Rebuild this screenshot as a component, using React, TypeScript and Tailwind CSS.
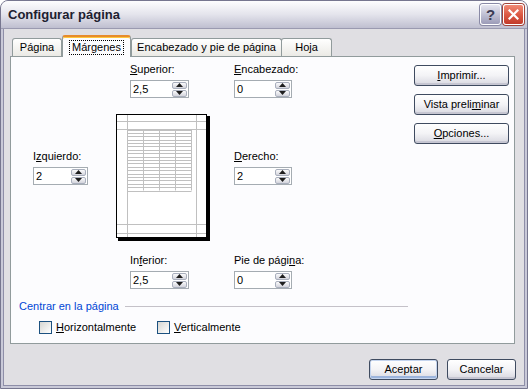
import React from "react";

function U({ children }: { children: React.ReactNode }) {
  return <span className="underline">{children}</span>;
}

function SpinBtn({ up }: { up?: boolean }) {
  return (
    <div className="w-[15px] h-[7px] rounded-[2px] border border-[#a9afbd] bg-linear-to-b from-[#fbfbfc] to-[#d3d4dc] flex items-center justify-center">
      <svg width="7" height="4" viewBox="0 0 7 4">
        <path d={up ? "M0 4 L3.5 0 L7 4Z" : "M0 0 L3.5 4 L7 0Z"} fill="#1e1e1e" />
      </svg>
    </div>
  );
}

function Field({ label, value, w }: { label: React.ReactNode; value: string; w: string }) {
  return (
    <div className="flex flex-col">
      <div className="leading-[13px] whitespace-nowrap">{label}</div>
      <div className={`mt-[4px] h-[18px] ${w} border border-[#a5acb2] bg-white flex items-center justify-between pl-[2px] pr-px`}>
        <span className="leading-[13px]">{value}</span>
        <div className="flex flex-col gap-px">
          <SpinBtn up />
          <SpinBtn />
        </div>
      </div>
    </div>
  );
}

function Btn({ children, w, def }: { children: React.ReactNode; w: string; def?: boolean }) {
  return (
    <div
      className={`${w} h-[21px] rounded-[3px] border border-[#3f4b60] bg-linear-to-b from-white via-[#f3f3f6] to-[#d8d8e0] flex items-center justify-center leading-[13px] whitespace-nowrap ${
        def ? "shadow-[inset_0_0_0_1px_#c4d4ee,inset_0_-2px_0_1px_#9cb4dc]" : "shadow-[inset_0_-2px_0_#c6c6d2]"
      }`}
    >
      {children}
    </div>
  );
}

function Check({ label, w }: { label: React.ReactNode; w?: string }) {
  return (
    <div className={`flex items-center ${w ?? ""}`}>
      <div className="w-[13px] h-[13px] border border-[#1c5180] bg-linear-to-br from-[#d6d6d2] to-white" />
      <span className="ml-[4px] leading-[13px]">{label}</span>
    </div>
  );
}

function Preview() {
  const rows = Array.from({ length: 19 }, (_, i) => 15.5 + i * (61 / 18));
  const cols = [11.5, 27.5, 43.5, 59.5, 75.5];
  return (
    <svg width="94" height="127" viewBox="0 0 94 127">
      <rect x="2" y="2" width="92" height="125" fill="#000" />
      <rect x="0.5" y="0.5" width="90" height="123" fill="#fff" stroke="#000" />
      <g stroke="#c0c0c0" strokeWidth="1">
        <line x1="11.5" y1="1" x2="11.5" y2="123" />
        <line x1="80.5" y1="1" x2="80.5" y2="123" />
        <line x1="1" y1="7.5" x2="90" y2="7.5" />
        <line x1="1" y1="15.5" x2="90" y2="15.5" />
        <line x1="1" y1="110.5" x2="90" y2="110.5" />
        <line x1="1" y1="119.5" x2="90" y2="119.5" />
        {rows.map((y, i) => (
          <line key={i} x1="11.5" y1={Math.round(y) + 0.5} x2="75.5" y2={Math.round(y) + 0.5} />
        ))}
        {cols.map((x, i) => (
          <line key={i} x1={x} y1="15.5" x2={x} y2="76.5" />
        ))}
      </g>
    </svg>
  );
}

function Tab({ children, w, active }: { children: React.ReactNode; w: string; active?: boolean }) {
  if (active) {
    return (
      <div
        className={`${w} h-[22px] -mb-px relative z-10 bg-[#fcfcfe] border-x border-[#919b9c] border-t-[2px] border-t-[#e68b2c] rounded-t-[3px] shadow-[inset_0_1px_0_#ffc83c] flex items-center justify-center`}
      >
        <span className="outline outline-1 outline-dotted outline-black px-[2px] leading-[13px]">{children}</span>
      </div>
    );
  }
  return (
    <div
      className={`${w} h-[18px] border border-b-0 border-[#919b9c] rounded-t-[3px] bg-linear-to-b from-white to-[#ebeae5] flex items-center justify-center leading-[13px] whitespace-nowrap`}
    >
      {children}
    </div>
  );
}

export default function App() {
  return (
    <div className="w-[528px] h-[389px] rounded-t-[8px] bg-[#c9c9d8] border border-[#76768f] flex flex-col overflow-hidden font-['Liberation_Sans',sans-serif] text-[11px] text-black">
      {/* Title bar */}
      <div className="h-[28px] shrink-0 flex items-center pl-[7px] pr-[3px] bg-linear-to-b from-[#fdfdfe] via-[#e4e4ec] to-[#bfbfd0] border-b border-[#9a9ab0]">
        <span className="font-bold text-[13px] leading-[15px] text-[#202030]">Configurar página</span>
        <div className="ml-auto flex gap-[2px]">
          <div className="w-[21px] h-[21px] rounded-[3px] border border-white bg-linear-to-b from-[#e6e6f0] to-[#9c9cb8] shadow-[0_0_0_1px_#8a8aa6] flex items-center justify-center">
            <span className="font-bold text-[15px] leading-[15px] text-[#3a3a52]">?</span>
          </div>
          <div className="w-[21px] h-[21px] rounded-[3px] border border-white bg-linear-to-b from-[#f08a76] via-[#dc5a45] to-[#c23a2a] shadow-[0_0_0_1px_#a0443a] flex items-center justify-center">
            <svg width="11" height="11" viewBox="0 0 11 11">
              <path d="M1.5 1.5 L9.5 9.5 M9.5 1.5 L1.5 9.5" stroke="#fff" strokeWidth="2.2" strokeLinecap="square" />
            </svg>
          </div>
        </div>
      </div>

      {/* Body */}
      <div className="flex-1 mx-[2px] mb-[2px] bg-[#e0dfe3] border-x border-b border-[#8e8ea8] pl-[6px] pr-[9px] pt-[6px] flex flex-col">
        {/* Tabs */}
        <div className="flex items-end h-[21px] pl-[2px]">
          <Tab w="w-[50px]">Página</Tab>
          <Tab w="w-[69px]" active>
            Márgenes
          </Tab>
          <Tab w="w-[151px]">Encabezado y pie de página</Tab>
          <Tab w="w-[51px] -ml-px">Hoja</Tab>
        </div>

        {/* Panel */}
        <div className="h-[288px] bg-[#fcfcfe] border border-[#919b9c] flex">
          <div className="w-[403px] flex flex-col pt-[6px]">
            <div className="flex pl-[119px] gap-[45px]">
              <Field label={<><U>S</U>uperior:</>} value="2,5" w="w-[59px]" />
              <Field label={<><U>E</U>ncabezado:</>} value="0" w="w-[58px]" />
            </div>

            <div className="flex items-start mt-[16px] pl-[22px]">
              <div className="mt-[36px] w-[55px]">
                <Field label={<>I<U>z</U>quierdo:</>} value="2" w="w-[55px]" />
              </div>
              <div className="ml-[28px]">
                <Preview />
              </div>
              <div className="mt-[36px] ml-[24px]">
                <Field label={<><U>D</U>erecho:</>} value="2" w="w-[58px]" />
              </div>
            </div>

            <div className="flex pl-[119px] gap-[45px] mt-[13px]">
              <Field label={<>In<U>f</U>erior:</>} value="2,5" w="w-[59px]" />
              <Field label={<>Pie de pági<U>n</U>a:</>} value="0" w="w-[58px]" />
            </div>

            <div className="flex items-center mt-[11px] pl-[8px] pr-[6px]">
              <span className="leading-[13px] text-[#0046d5] whitespace-nowrap">Centrar en la página</span>
              <div className="flex-1 ml-[6px] h-px bg-[#c4c1c8]" />
            </div>

            <div className="flex mt-[8px] pl-[28px]">
              <Check w="w-[118px]" label={<><U>H</U>orizontalmente</>} />
              <Check label={<><U>V</U>erticalmente</>} />
            </div>
          </div>

          <div className="flex flex-col gap-[8px] pt-[8px]">
            <Btn w="w-[95px]">
              <U>I</U>mprimir...
            </Btn>
            <Btn w="w-[95px]">
              Vista preli<U>m</U>inar
            </Btn>
            <Btn w="w-[95px]">
              <U>O</U>pciones...
            </Btn>
          </div>
        </div>

        {/* Bottom buttons */}
        <div className="flex justify-end gap-[9px] mt-[15px] -mr-px">
          <Btn w="w-[69px]" def>
            Aceptar
          </Btn>
          <Btn w="w-[69px]">Cancelar</Btn>
        </div>
      </div>
    </div>
  );
}
